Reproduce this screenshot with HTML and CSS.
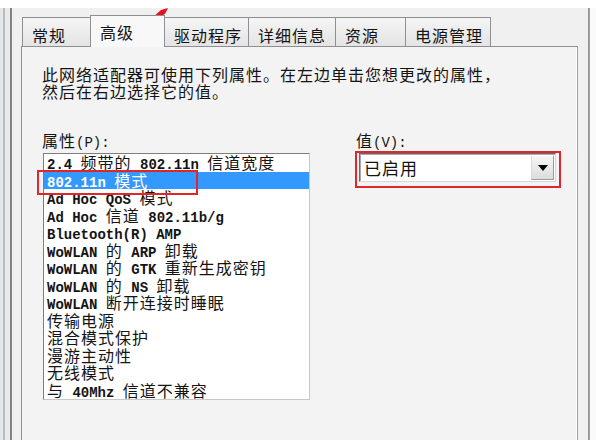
FILE: index.html
```html
<!DOCTYPE html>
<html lang="zh-CN">
<head>
<meta charset="utf-8">
<title>高级</title>
<link rel="stylesheet" href="styles.css">
</head>
<body>
<div class="window">
  <div class="lframe"></div>
  <div class="main">
    <div class="tabs">
      <div class="tab t1">常规</div>
      <div class="tab sel t2">高级</div>
      <div class="tab t3">驱动程序</div>
      <div class="tab t4">详细信息</div>
      <div class="tab t5">资源</div>
      <div class="tab t6">电源管理</div>
    </div>
    <div class="panel">
      <p class="desc">此网络适配器可使用下列属性。在左边单击您想更改的属性，<br>然后在右边选择它的值。</p>
      <div class="cols">
        <div class="col-left">
          <div class="label">属性<span class="en">(P):</span></div>
          <div class="listbox">
            <ul class="items">
              <li><span class="en">2.4 </span>频带的<span class="en"> 802.11n </span>信道宽度</li>
              <li class="selected"><span class="en">802.11n </span>模式</li>
              <li><span class="en">Ad Hoc QoS </span>模式</li>
              <li><span class="en">Ad Hoc </span>信道<span class="en"> 802.11b/g</span></li>
              <li><span class="en">Bluetooth(R) AMP</span></li>
              <li><span class="en">WoWLAN </span>的<span class="en"> ARP </span>卸载</li>
              <li><span class="en">WoWLAN </span>的<span class="en"> GTK </span>重新生成密钥</li>
              <li><span class="en">WoWLAN </span>的<span class="en"> NS </span>卸载</li>
              <li><span class="en">WoWLAN </span>断开连接时睡眠</li>
              <li>传输电源</li>
              <li>混合模式保护</li>
              <li>漫游主动性</li>
              <li>无线模式</li>
              <li>与<span class="en"> 40Mhz </span>信道不兼容</li>
            </ul>
            <div class="mark"></div>
          </div>
        </div>
        <div class="col-right">
          <div class="label rlabel">值<span class="en">(V):</span></div>
          <div class="markbox">
            <div class="combo">
              <span class="val">已启用</span>
              <span class="btn"><svg width="10" height="6" viewBox="0 0 10 6"><polygon points="0,0 10,0 5,6" fill="#000"/></svg></span>
            </div>
          </div>
        </div>
      </div>
    </div>
  </div>
  <div class="rframe"></div>
</div>
<svg class="arrow" width="22" height="16" viewBox="0 0 22 16"><polygon points="3,13 11,6 18,4 15,10 7,14" fill="#e3141c"/></svg>
</body>
</html>
```
FILE: styles.css
```css
* { box-sizing: border-box; }
html, body { margin: 0; padding: 0; }
body {
  width: 596px;
  height: 440px;
  overflow: hidden;
  background: #ffffff;
  position: relative;
  font-family: "Noto Sans CJK SC", "Liberation Sans", sans-serif;
  color: #141414;
}
.window {
  margin-top: 8px;
  height: 432px;
  display: flex;
  background: #f0f0f0;
}
.lframe {
  flex: none;
  width: 12px;
  background: linear-gradient(90deg, #e4e6e8 0, #e4e6e8 3px, #b9bdc1 3px, #b9bdc1 5px, #e8eaec 5px, #e8eaec 10px, #7a7a7a 10px, #8c8c8c 12px);
}
.main {
  flex: none;
  width: 566px;
  padding-left: 9px;
  display: flex;
  flex-direction: column;
}
.rframe {
  flex: none;
  width: 18px;
  background: linear-gradient(90deg, #f0f0f0 0, #f0f0f0 10px, #8e9092 10px, #a4a6a8 12px, #fafafa 12px);
}
.tabs {
  height: 38px;
  display: flex;
  align-items: flex-end;
  padding-left: 1px;
}
.tab {
  height: 29px;
  margin-right: -1px;
  border: 1px solid #8d8f93;
  border-bottom: none;
  background: linear-gradient(#f5f5f5, #e4e4e4);
  font-size: 16px;
  letter-spacing: 1px;
  line-height: 24px;
  padding: 5px 0 0 9px;
  white-space: nowrap;
}
.tab.sel {
  height: 32px;
  margin-bottom: -1px;
  background: #f8f8f8;
  padding-top: 4px;
  position: relative;
  z-index: 1;
}
.t1 { width: 69px; }
.t2 { width: 75px; }
.t3 { width: 85px; }
.t4 { width: 88px; }
.t5 { width: 71px; }
.t6 { width: 86px; }
.panel {
  flex: 1;
  border: 1px solid #8d8f93;
  border-bottom: none;
  border-right-color: #a2a2a2;
  box-shadow: inset -1px 0 #ffffff;
  background: #f3f3f3;
  padding: 19px 0 0 20px;
}
.desc {
  margin: 0;
  font-size: 16px;
  letter-spacing: 1px;
  line-height: 17px;
  white-space: nowrap;
}
.cols {
  margin-top: 32px;
  display: grid;
  grid-template-columns: 268px 206px;
  column-gap: 45px;
}
.label {
  font-size: 16px;
  letter-spacing: 1px;
  line-height: 17px;
  height: 17px;
  margin-bottom: 4px;
  white-space: nowrap;
}
.rlabel {
  padding-left: 1px;
  margin-bottom: 2px;
}
.en {
  font-family: "Liberation Mono", monospace;
  font-size: 14px;
  letter-spacing: 0;
  white-space: pre;
}
.listbox {
  position: relative;
  margin-left: 1px;
  width: 267px;
  height: 247px;
  background: #ffffff;
  border: 1px solid #7e7e7e;
  border-right-color: #c8c8c8;
  border-bottom-color: #c8c8c8;
}
.items {
  list-style: none;
  margin: 0;
  padding: 0;
}
.items li {
  height: 17.5px;
  line-height: 17.5px;
  padding-left: 3px;
  font-size: 16px;
  letter-spacing: 1px;
  white-space: nowrap;
}
.items .en {
  font-weight: 700;
}
.items li.selected {
  background: #3399ff;
  color: #ffffff;
}
.mark {
  position: absolute;
  left: -7px;
  top: 16px;
  width: 161px;
  height: 25px;
  border: 2px solid #e0252b;
}
.markbox {
  width: 206px;
  height: 37px;
  border: 2px solid #e0252b;
  padding: 0 3px 4px 2px;
}
.combo {
  height: 29px;
  display: flex;
  align-items: stretch;
  background: #ffffff;
  border: 1px solid #6a6a6a;
  border-right-color: #d6d6d6;
  border-bottom-color: #d6d6d6;
  box-shadow: inset 1px 1px #a8a8a8;
}
.val {
  flex: 1;
  font-size: 17px;
  letter-spacing: 1px;
  line-height: 27px;
  padding-left: 4px;
}
.btn {
  width: 23px;
  margin: 2px 1px 1px 0;
  display: flex;
  align-items: center;
  justify-content: center;
  background: linear-gradient(#f6f6f6, #dcdcdc);
  border-left: 1px solid #d8d8d8;
  border-bottom: 1px solid #9a9a9a;
  border-right: 1px solid #9a9a9a;
}
.arrow {
  position: absolute;
  left: 150px;
  top: 4px;
}
```
